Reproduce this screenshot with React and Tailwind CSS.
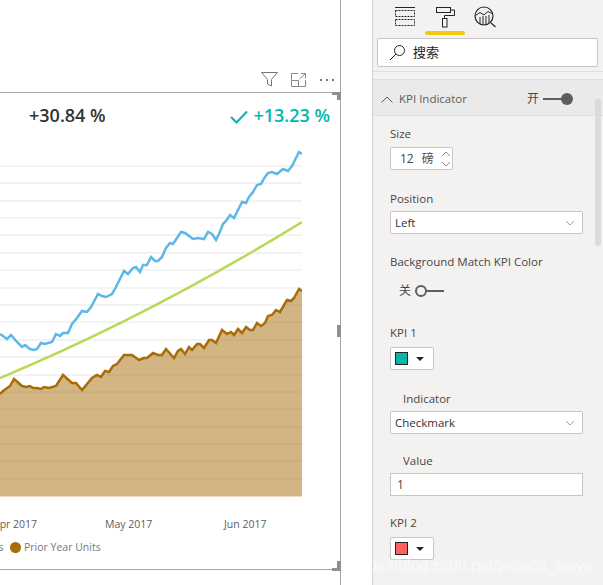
const FONT = { fontFamily: '"Open Sans", "Noto Sans CJK SC", sans-serif' };

const BLUE = "0,334 3,336 7,339 11,335 17,342 22,347 25,345 30,349 34,350 37,349 41,343 45,344 52,342 56,334 60,336 63,333 68,333 72,324 77,318 82,311 87,312 91,307 98,294 102,296 106,297 112,294 115,289 124,271 128,274 133,268 136,267 140,272 143,265 147,265 151,257 155,261 158,261 162,257 166,248 170,243 173,244 181,232 185,233 193,239 198,238 204,239 208,232 212,234 216,240 219,234 223,224 226,221 230,215 234,218 242,202 246,203 249,197 253,192 257,185 261,184 265,177 268,173 272,172 277,174 283,169 288,171 292,166 295,160 299,152 302,154";
const BROWN = "0,394 3,391 10,386 14,379 22,386 26,387 30,386 33,388 37,388 41,389 44,387 49,388 56,386 63,375 72,383 76,383 82,390 92,378 97,375 101,377 105,371 109,372 113,366 117,364 124,355 132,355 139,360 144,358 147,358 153,353 158,355 162,355 166,349 174,358 178,351 181,349 185,354 189,347 192,350 197,344 200,344 204,348 209,340 212,340 216,343 222,330 227,334 231,332 234,335 238,329 242,333 246,327 250,330 253,330 257,323 261,326 265,323 268,316 272,315 276,310 280,312 287,300 291,301 294,298 299,289 302,291";
const GRID = [166, 183, 201, 218, 235, 253, 270, 288, 305, 322, 340, 357, 375, 392, 409, 427, 444, 461, 479];

function Chart() {
  return (
    <svg width="302" height="360" viewBox="0 140 302 360" className="block">
      {GRID.map((y) => (
        <line key={y} x1="0" x2="302" y1={y} y2={y} stroke="#efefef" strokeWidth="1.5" />
      ))}
      <polygon points={`${BROWN} 302,496.5 0,496.5`} fill="#a86c08" fillOpacity="0.5" />
      <path d="M0 378 Q151 315 302 222" fill="none" stroke="#b6d957" strokeWidth="2.5" />
      <polyline points={BLUE} fill="none" stroke="#5cb8e6" strokeWidth="2.5" />
      <polyline points={BROWN} fill="none" stroke="#a86c08" strokeWidth="2.5" />
    </svg>
  );
}

function ChevronDown() {
  return (
    <svg width="10" height="6" viewBox="0 0 10 6" className="shrink-0">
      <path d="M1 1 L5 5 L9 1" fill="none" stroke="#a19f9d" strokeWidth="1" />
    </svg>
  );
}

function Select({ value }) {
  return (
    <div className="h-[23px] w-[193px] bg-white border border-[#c8c6c4] rounded-[2px] flex items-center justify-between pl-[4px] pr-[7px] text-[11.5px] text-[#323130]">
      {value}
      <ChevronDown />
    </div>
  );
}

function ColorPicker({ color }) {
  return (
    <div className="h-[23px] w-[44px] bg-white border border-[#c8c6c4] rounded-[2px] flex items-center pl-[4px] gap-[8px]">
      <div className={`w-[13px] h-[13px] border border-[#252423] ${color}`}></div>
      <div className="w-0 h-0 border-x-[4px] border-x-transparent border-t-[4px] border-t-[#252423]"></div>
    </div>
  );
}

function Label({ children, className }) {
  return <div className={`h-4 leading-4 text-[11.5px] text-[#484644] ${className}`}>{children}</div>;
}

function TabIcons() {
  return (
    <div className="h-[31px] relative pl-[21px]">
      <svg width="110" height="31" viewBox="394 0 110 31" className="block" fill="none" stroke="#252423">
        <path d="M395 7.5 H415" />
        <rect x="395.5" y="10.5" width="19" height="6" strokeDasharray="2 1" />
        <rect x="395.5" y="19.5" width="19" height="6" strokeDasharray="2 1" />
        <rect x="436.5" y="7.5" width="14" height="5" />
        <path d="M451 10 H454.5 V15.5 H444.5 V18" />
        <rect x="442.5" y="18.5" width="4.5" height="8.5" />
        <circle cx="484" cy="16" r="9" strokeWidth="1.2" />
        <path d="M491 23 L495.5 27" strokeWidth="1.2" />
        <path d="M475.5 15.5 L480 12.5 L484 15 L488 11.5 L492 13.5" />
        <path d="M480 17 V24 M483 16 V25 M486 16 V25 M489 15 V23" />
      </svg>
    </div>
  );
}

export default function App() {
  return (
    <div className="relative flex w-[603px] h-[585px] overflow-hidden bg-white" style={FONT}>
      {/* report canvas */}
      <div className="w-[341px] h-full shrink-0 border-r border-[#a6a6a6] flex flex-col">
        <div className="h-[92px] shrink-0 flex items-end justify-end gap-[13px] pr-[5px] pb-[5px]">
          <svg width="17" height="15" viewBox="0 0 17 15" fill="none" stroke="#7a7674">
            <path d="M0.5 0.5 H16.5 L10.5 7.5 V14 L6.5 12 V7.5 Z" />
          </svg>
          <svg width="15" height="14" viewBox="0 0 15 14" fill="none" stroke="#8a8886">
            <path d="M7 0.5 H0.5 V13.5 H14.5 V7 M0.5 7.5 H7.5 V13.5 M9.5 0.5 H14.5 V5.5 M14 1 L8.5 6" />
          </svg>
          <div className="flex gap-[4px] w-[16px] h-[14px] items-center pl-[1px]">
            <div className="w-[2px] h-[2px] bg-[#777]"></div>
            <div className="w-[2px] h-[2px] bg-[#777]"></div>
            <div className="w-[2px] h-[2px] bg-[#777]"></div>
          </div>
        </div>
        <div className="relative h-[478px] shrink-0 border-y border-[#a6a6a6] overflow-hidden">
          <div className="h-[45px] flex items-center pl-[29px] pr-[10px] text-[18px] font-semibold">
            <span className="text-[#333333]">+30.84 %</span>
            <svg width="18" height="14" viewBox="0 0 18 14" fill="none" stroke="#01b8aa" strokeWidth="2" className="ml-auto mr-[5px] mt-[2px]">
              <path d="M1 7 L6.5 12.5 L17 1.5" />
            </svg>
            <span className="text-[#01b8aa]">+13.23 %</span>
          </div>
          <div className="mt-[2px]">
            <Chart />
          </div>
          <div className="flex h-[16px] mt-[16px] text-[10.5px] leading-4 text-[#605e5c]">
            <span className="-ml-[7px] w-[112px] shrink-0 whitespace-nowrap">Apr 2017</span>
            <span className="w-[119px] shrink-0 whitespace-nowrap">May 2017</span>
            <span className="whitespace-nowrap">Jun 2017</span>
          </div>
          <div className="flex items-center h-[16px] mt-[7px] text-[10.5px] leading-4 text-[#777777]">
            <span className="-ml-[22px] w-[32px] shrink-0 whitespace-nowrap">Units</span>
            <span className="w-[11px] h-[11px] rounded-full bg-[#a86c08] shrink-0"></span>
            <span className="ml-[3px] whitespace-nowrap">Prior Year Units</span>
          </div>
        </div>
      </div>

      {/* format pane */}
      <div className="ml-[31px] flex-1 bg-[#f3f2f1] border-l border-[#d2d0ce] flex flex-col">
        <TabIcons />
        <div className="h-[4px] w-[40px] ml-[52px] rounded-full bg-[#f2c811]"></div>
        <div className="px-[4px] mt-[3px] pr-[5px]">
          <div className="h-[29px] bg-white border border-[#c8c6c4] rounded-[2px] flex items-center pl-[11px] gap-[8px] text-[13px] text-[#252423]">
            <svg width="16" height="16" viewBox="0 0 16 16" fill="none" stroke="#252423">
              <circle cx="10.5" cy="5.5" r="5" />
              <path d="M7 9 L1 15" />
            </svg>
            搜索
          </div>
        </div>
        <div className="h-[5px] shrink-0 border-b border-[#e1dfdd]"></div>
        <div className="h-[8px] shrink-0 border-b border-[#e1dfdd]"></div>
        <div className="h-[36px] shrink-0 bg-[#eaeaea] border-b border-[#e1dfdd] flex items-center pl-[8px] pt-[3px] text-[11.5px] text-[#605e5c]">
          <svg width="12" height="7" viewBox="0 0 12 7" fill="none" stroke="#605e5c">
            <path d="M0.5 6.5 L6 1 L11.5 6.5" />
          </svg>
          <span className="ml-[6px] w-[128px] shrink-0 whitespace-nowrap">KPI Indicator</span>
          <span className="w-[16px] shrink-0 text-[12px] text-[#484644]">开</span>
          <div className="w-[19px] h-[2px] bg-[#605e5c]"></div>
          <div className="w-[12px] h-[12px] rounded-full bg-[#605e5c] -ml-[1px]"></div>
        </div>
        <div className="pl-[17px] pt-[10px]">
          <Label>Size</Label>
          <div className="mt-[5px] h-[23px] w-[63px] bg-white border border-[#c8c6c4] rounded-[2px] flex items-center pl-[9px] gap-[8px] text-[12px] text-[#484644]">
            <span>12</span>
            <span>磅</span>
            <svg width="10" height="16" viewBox="0 0 10 16" fill="none" stroke="#8a8886" className="-ml-[1px]">
              <path d="M1 5 L5 1 L9 5 M1 11 L5 15 L9 11" />
            </svg>
          </div>
          <Label className="mt-[21px]">Position</Label>
          <div className="mt-[4px]"><Select value="Left" /></div>
          <Label className="mt-[20px]">Background Match KPI Color</Label>
          <div className="mt-[13px] h-4 flex items-center pl-[9px] text-[12px] text-[#484644]">
            关
            <div className="ml-[4px] w-[12px] h-[12px] rounded-full border-2 border-[#605e5c]"></div>
            <div className="w-[18px] h-[2px] bg-[#605e5c] -ml-[1px]"></div>
          </div>
          <Label className="mt-[26px]">KPI 1</Label>
          <div className="mt-[6px]"><ColorPicker color="bg-[#01b8aa]" /></div>
          <Label className="mt-[21px] pl-[13px]">Indicator</Label>
          <div className="mt-[4px]"><Select value="Checkmark" /></div>
          <Label className="mt-[19px] pl-[13px]">Value</Label>
          <div className="mt-[4px] h-[23px] w-[193px] bg-white border border-[#c8c6c4] flex items-center pl-[6px] text-[12px] text-[#484644]">1</div>
          <Label className="mt-[19px]">KPI 2</Label>
          <div className="mt-[6px]"><ColorPicker color="bg-[#fd625e]" /></div>
        </div>
      </div>

      {/* selection handles */}
      <div className="absolute left-[332px] top-[92px] w-[9px] h-[3px] bg-[#8f8f8f]"></div>
      <div className="absolute left-[337px] top-[92px] w-[4px] h-[8px] bg-[#8f8f8f]"></div>
      <div className="absolute left-[332px] top-[568px] w-[9px] h-[3px] bg-[#8f8f8f]"></div>
      <div className="absolute left-[337px] top-[561px] w-[4px] h-[9px] bg-[#8f8f8f]"></div>
      <div className="absolute left-[337px] top-[325px] w-[4px] h-[12px] bg-[#8f8f8f]"></div>

      {/* scrollbar */}
      <div className="absolute left-[595px] top-[99px] w-[6px] h-[147px] rounded-full bg-[#dcdbd9]"></div>

      {/* watermark */}
      <div
        className="absolute right-[10px] top-[556px] text-[16px] leading-5 text-white/60 whitespace-nowrap"
        style={{ fontFamily: '"Liberation Sans", sans-serif' }}
      >
        https://blog.csdn.net/jessica_seiya
      </div>
    </div>
  );
}
